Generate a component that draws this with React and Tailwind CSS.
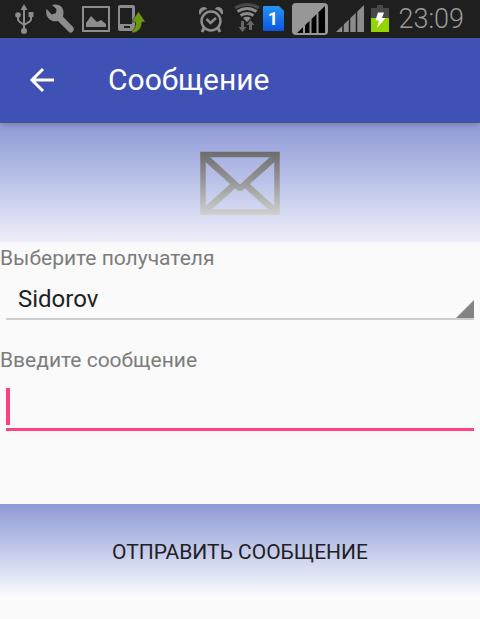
import React from 'react';

const recipients = ['Sidorov', 'Ivanov', 'Petrov'];

const UsbIcon = () => (
  <svg width="28" height="32" viewBox="0 0 28 32" fill="none" stroke="#8c8c8c" strokeWidth="2">
    <path d="M14 6v21" />
    <path d="M8 13v3q0 2 2 3l4 3M21 12v4q0 2-2 3l-5 3" />
    <path d="M14 1l3.500 6h-7z" fill="#8c8c8c" stroke="none" />
    <circle cx="8" cy="12" r="2.800" fill="#8c8c8c" stroke="none" />
    <path d="M18.500 9h5v5h-5z" fill="#8c8c8c" stroke="none" />
    <circle cx="14" cy="28" r="3" fill="#8c8c8c" stroke="none" />
  </svg>
);

const WrenchIcon = () => (
  <svg width="28" height="32" viewBox="0 0 28 32">
    <path
      d="M6 2C12 0 17.500 3.500 17.500 9C17.500 11 17.300 12.500 16.800 13.500L27.500 24.500C29 27 26 30.500 23.500 29.500L12 18C6.500 19.500 1 16 0.300 10.500C0 9 0.200 7 0.800 6L5.500 11.500L10 10L10.500 6Z"
      fill="#8c8c8c"
    />
  </svg>
);

const PictureIcon = () => (
  <svg width="28" height="32" viewBox="0 0 28 32">
    <path d="M1 4h26v24H1z" fill="none" stroke="#8c8c8c" strokeWidth="2" />
    <path d="M4 24v-4l5-7 6 6 4-2 5 4v3z" fill="#8c8c8c" />
  </svg>
);

const PhoneIcon = () => (
  <svg width="28" height="32" viewBox="0 0 28 32">
    <path d="M2 2h13a2 2 0 0 1 2 2v22a2 2 0 0 1-2 2H2a2 2 0 0 1-2-2V4a2 2 0 0 1 2-2z" fill="#8c8c8c" />
    <path d="M2 5h12v16H2z" fill="#1f1f1f" />
    <path d="M6 23h6v2H6z" fill="#1f1f1f" />
    <path d="M20.500 8.500L27.500 19H24Q24 28 15 30Q13 29 14 28Q18 26 17.500 19H13.500Z" fill="#6b9812" stroke="#1f1f1f" strokeWidth="0.500" />
  </svg>
);

const AlarmIcon = () => (
  <svg width="28" height="32" viewBox="0 0 28 32" fill="none" stroke="#8c8c8c" strokeWidth="2.500">
    <circle cx="12" cy="18" r="9.500" />
    <path d="M0 11Q-1 4 6 4L8.500 6Q3 7 1.500 11.500ZM24 11Q25 4 18 4L15.500 6Q21 7 22.500 11.500Z" fill="#8c8c8c" stroke="none" />
    <path d="M5 25l-2 4M19 25l2 4" strokeWidth="3" />
    <path d="M7.500 16l4 4 5.500-5" strokeWidth="2.500" />
  </svg>
);

const WifiIcon = () => (
  <svg width="26" height="32" viewBox="0 0 26 32" fill="none">
    <path d="M1 5q12-7 24 0" stroke="#484848" strokeWidth="3" />
    <path d="M3.500 8.500q9.500-6 19 0" stroke="#8c8c8c" strokeWidth="3" />
    <path d="M6.500 12.500q6.500-4 13 0" stroke="#8c8c8c" strokeWidth="3" />
    <path d="M9 15q4-2.500 8 0L13 19z" fill="#8c8c8c" />
    <path d="M7 18h3v6h2.500L8.500 29 4.500 24H7zM15 27v-5h-2.500l4-5 4 5H18v5z" fill="#666666" />
  </svg>
);

const SimIcon = () => (
  <svg width="22" height="32" viewBox="0 0 22 32">
    <defs>
      <linearGradient id="sim" x1="0" y1="0" x2="0" y2="1">
        <stop offset="0" stopColor="#2794f5" />
        <stop offset="1" stopColor="#0b55de" />
      </linearGradient>
    </defs>
    <path d="M1 3h15l5 5v19q0 1-1 1H1q-1 0-1-1V4q0-1 1-1z" fill="url(#sim)" />
    <text x="10" y="22" textAnchor="middle" fill="#ffffff" className="font-[Roboto,sans-serif] text-lg font-bold">1</text>
  </svg>
);

const SignalBoxIcon = () => (
  <svg width="37" height="34" viewBox="0 0 37 34">
    <rect width="36" height="32" y="1" rx="4" fill="#979797" />
    <path d="M5 31L33 4v27z" fill="#000000" />
    <path d="M12 23v8M18.500 17v14M25.500 11v20" stroke="#979797" strokeWidth="2" />
  </svg>
);

const SignalIcon = () => (
  <svg width="28" height="32" viewBox="0 0 28 32">
    <path d="M0 29L28 2v27z" fill="#8c8c8c" />
    <path d="M7 20v9M13.500 14v15M20.500 7v22" stroke="#1f1f1f" strokeWidth="1.500" />
  </svg>
);

const BatteryIcon = () => (
  <svg width="20" height="32" viewBox="0 0 20 32">
    <path d="M6 2h6v3h6v11H0V5h6z" fill="#484848" />
    <path d="M0 15h18v14H0z" fill="#94d500" />
    <path d="M7 9.500h6L11 15h3.500L6 25l2-7.500H4.500z" fill="#ffffff" />
  </svg>
);

const StatusBar = () => (
  <div className="flex items-center justify-between h-[38px] pl-[10px] pr-4 bg-[#1f1f1f]">
    <div className="flex items-center gap-2">
      <UsbIcon />
      <WrenchIcon />
      <PictureIcon />
      <PhoneIcon />
    </div>
    <div className="flex items-center gap-[7px]">
      <AlarmIcon />
      <div className="flex items-center gap-[3px]">
        <WifiIcon />
        <SimIcon />
      </div>
      <SignalBoxIcon />
      <SignalIcon />
      <BatteryIcon />
      <span className="text-[27px] leading-8 font-light text-[#9a9a9a]">23:09</span>
    </div>
  </div>
);

const EnvelopeIcon = () => (
  <svg width="80" height="64" viewBox="0 0 80 64" fill="none" stroke="url(#envelope)">
    <defs>
      <linearGradient id="envelope" gradientUnits="userSpaceOnUse" x1="0" y1="0" x2="0" y2="64">
        <stop offset="0" stopColor="#6b6b6b" />
        <stop offset="0.500" stopColor="#999a9b" />
        <stop offset="1" stopColor="#d0d0d0" />
      </linearGradient>
    </defs>
    <path d="M3 3.500h74v57.500H3z" strokeWidth="5.500" />
    <path d="M5 6l32 29q3 3 6 0L75 6M5 60l29-26M75 60L46 34" strokeWidth="6.500" />
  </svg>
);

const App = () => {
  const [recipient, setRecipient] = React.useState(recipients[0]);
  const [message, setMessage] = React.useState('');

  return (
    <div className="min-h-screen bg-[#fafafa] font-[Roboto,sans-serif]">
      <StatusBar />

      <header className="relative flex items-center h-[85px] px-7 gap-[52px] bg-[#3f51b5] border-b border-[#4c5484] shadow-md">
        <button type="button" aria-label="Назад" className="text-white">
          <svg width="28" height="28" viewBox="0 0 28 28" fill="none" stroke="currentColor" strokeWidth="3">
            <path d="M26 14H4M15 3L4 14l11 11" />
          </svg>
        </button>
        <h1 className="text-[30px] leading-9 text-white">Сообщение</h1>
      </header>

      <main>
        <div className="flex items-center justify-center h-[119px] bg-linear-to-b from-[#8e99d5] to-[#eeeffa]">
          <EnvelopeIcon />
        </div>

        <form onSubmit={(e) => e.preventDefault()}>
          <label htmlFor="recipient" className="block text-[21px] leading-8 text-[#7c7c7c]">
            Выберите получателя
          </label>
          <div className="relative mx-1.5 mt-1 border-b-2 border-[#cccccc]">
            <select
              id="recipient"
              value={recipient}
              onChange={(e) => setRecipient(e.target.value)}
              className="block w-full h-10 px-3 pt-0.5 appearance-none bg-transparent text-2xl text-[#212121] outline-none"
            >
              {recipients.map((name) => (
                <option key={name}>{name}</option>
              ))}
            </select>
            <svg width="18" height="18" viewBox="0 0 18 18" className="absolute right-0 bottom-0 pointer-events-none">
              <path d="M18 0v18H0z" fill="#838383" />
            </svg>
          </div>

          <label htmlFor="message" className="block mt-6 text-[21px] leading-8 text-[#7c7c7c]">
            Введите сообщение
          </label>
          <div className="flex mx-1.5 mt-3 pb-[3px] border-b-3 border-[#ff4081]">
            <span className="w-1 h-[37px] bg-[#ff4081]" />
            <input
              id="message"
              type="text"
              value={message}
              onChange={(e) => setMessage(e.target.value)}
              className="flex-1 min-w-0 bg-transparent text-2xl text-[#212121] caret-[#ff4081] outline-none"
            />
          </div>

          <button
            type="submit"
            className="block w-full h-24 mt-[73px] pt-0.5 bg-linear-to-b from-[#8e99d5] to-white text-[21px] text-[#212121] uppercase"
          >
            Отправить сообщение
          </button>
        </form>
      </main>
    </div>
  );
};

export default App;
